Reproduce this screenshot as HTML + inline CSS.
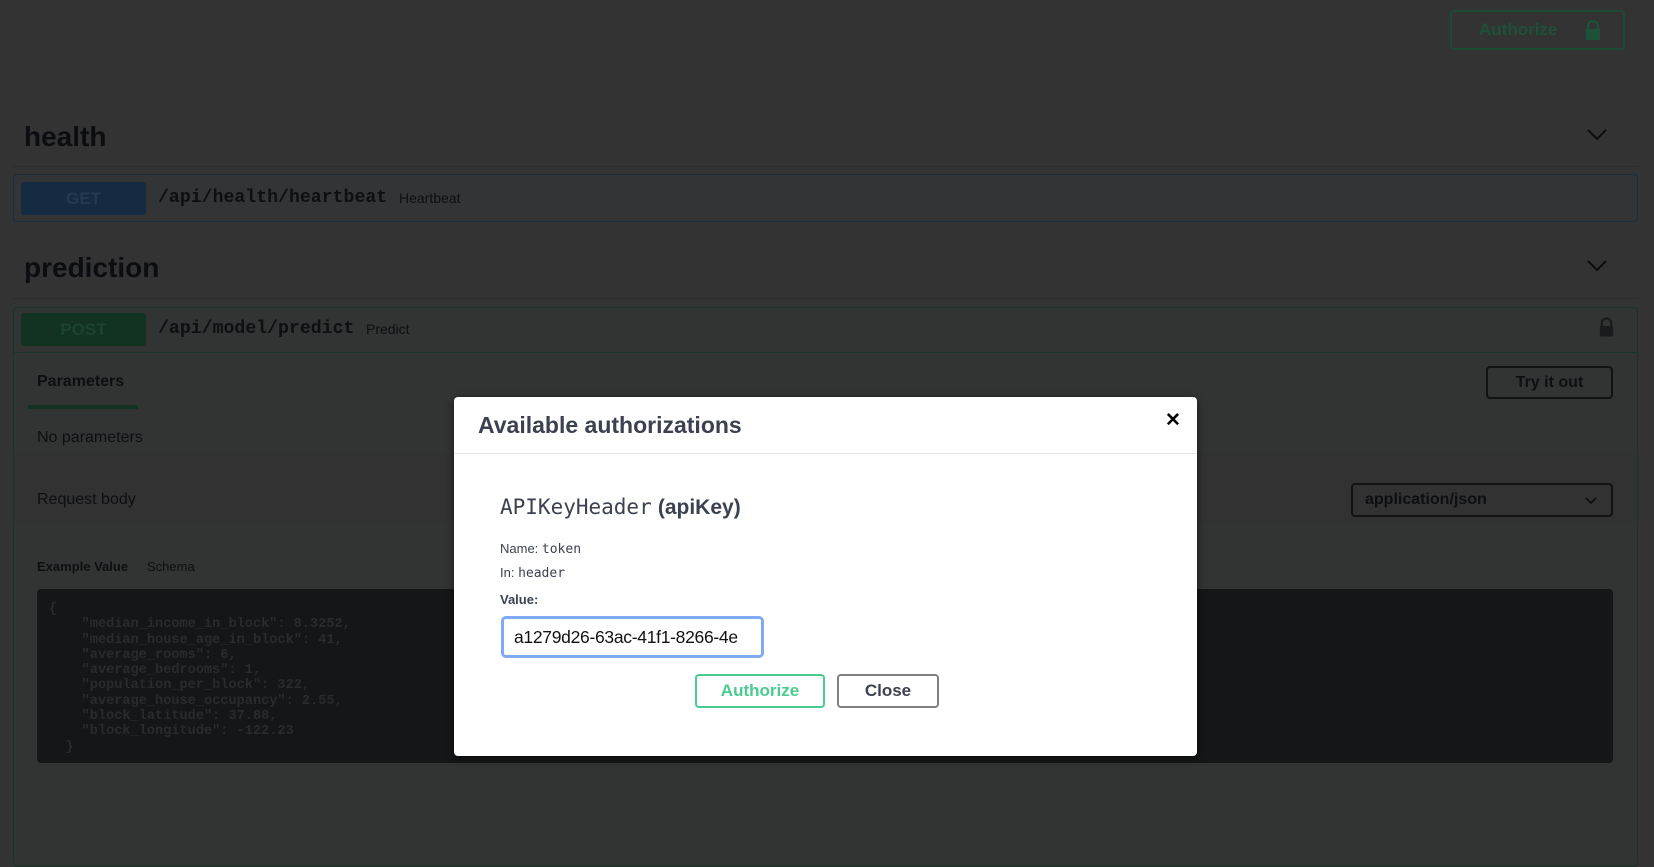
<!DOCTYPE html>
<html><head><meta charset="utf-8">
<style>
*{margin:0;padding:0;box-sizing:border-box}
body{width:1654px;height:840px;background:#333333;position:relative;overflow:hidden;font-family:"Liberation Sans",sans-serif}
.a{position:absolute}
.h{font-weight:bold;font-size:28px;color:#0c0d10}
.mono{font-family:"Liberation Mono",monospace}
</style></head><body>
<div class="a" style="left:1450px;top:10px;width:175px;height:40px;border:2px solid #1c4a34;border-radius:4px;color:#1d5138;font-weight:bold;font-size:17px;line-height:36px;padding-left:27px">Authorize
<svg class="a" style="left:132px;top:8px" width="18" height="20" viewBox="0 0 18 20"><path d="M4 9V6a5 5 0 0 1 10 0v3" fill="none" stroke="#1d5138" stroke-width="2.4"/><rect x="2" y="9" width="14" height="11" rx="1" fill="#1d5138"/></svg></div>

<div class="a h" style="left:24px;top:121px">health</div>
<svg class="a" style="left:1586px;top:128px" width="22" height="14"><path d="M2 2l9 9 9-9" fill="none" stroke="#0c0d10" stroke-width="2"/></svg>
<div class="a" style="left:13px;top:166px;width:1625px;height:1px;background:#2c2d2f"></div>
<div class="a" style="left:13px;top:174px;width:1625px;height:48px;border:1px solid #1a2e40;border-radius:4px;background:#323436"></div>
<div class="a" style="left:21px;top:182px;width:125px;height:33px;background:#142b42;border-radius:3px;color:#233a50;font-weight:bold;font-size:17px;text-align:center;line-height:33px">GET</div>
<div class="a mono" style="left:158px;top:188px;font-size:18.2px;font-weight:bold;color:#0e0f12">/api/health/heartbeat</div>
<div class="a" style="left:399px;top:190px;font-size:14px;color:#0e0f12">Heartbeat</div>

<div class="a h" style="left:24px;top:252px">prediction</div>
<svg class="a" style="left:1586px;top:259px" width="22" height="14"><path d="M2 2l9 9 9-9" fill="none" stroke="#0c0d10" stroke-width="2"/></svg>
<div class="a" style="left:13px;top:298px;width:1625px;height:1px;background:#2c2d2f"></div>
<div class="a" style="left:13px;top:307px;width:1625px;height:560px;border:1px solid #18352a;border-radius:4px;background:#323333"></div>
<div class="a" style="left:14px;top:352px;width:1623px;height:1px;background:#18352a"></div>
<div class="a" style="left:21px;top:313px;width:125px;height:33px;background:#123322;border-radius:3px;color:#1c4330;font-weight:bold;font-size:17px;text-align:center;line-height:33px">POST</div>
<div class="a mono" style="left:158px;top:319px;font-size:18.2px;font-weight:bold;color:#0e0f12">/api/model/predict</div>
<div class="a" style="left:366px;top:321px;font-size:14px;color:#0e0f12">Predict</div>
<svg class="a" style="left:1598px;top:317px" width="17" height="20" viewBox="0 0 18 20"><path d="M4 9V6a5 5 0 0 1 10 0v3" fill="none" stroke="#1a1b1d" stroke-width="2.4"/><rect x="2" y="9" width="14" height="11" rx="1" fill="#1a1b1d"/></svg>

<div class="a" style="left:37px;top:373px;font-size:16px;font-weight:bold;color:#0e0f12">Parameters</div>
<div class="a" style="left:28px;top:405px;width:110px;height:4px;background:#123322"></div>
<div class="a" style="left:1486px;top:366px;width:127px;height:33px;border:2px solid #111214;border-radius:4px;font-size:16px;font-weight:bold;color:#0e0f12;text-align:center;line-height:29px">Try it out</div>
<div class="a" style="left:37px;top:429px;font-size:16px;color:#0e0f12">No parameters</div>
<div class="a" style="left:14px;top:453px;width:1623px;height:70px;background:#323232"></div>
<div class="a" style="left:37px;top:491px;font-size:16px;color:#0e0f12">Request body</div>
<div class="a" style="left:1351px;top:483px;width:262px;height:34px;border:2px solid #111214;border-radius:4px;font-size:16px;font-weight:bold;color:#0e0f12;line-height:30px;padding-left:12px">application/json
<svg class="a" style="left:232px;top:12px" width="12" height="8"><path d="M1 1l5 5 5-5" fill="none" stroke="#0e0f12" stroke-width="1.8"/></svg></div>
<div class="a" style="left:37px;top:559px;font-size:13px;font-weight:bold;color:#0e0f12">Example Value</div>
<div class="a" style="left:147px;top:559px;font-size:13px;color:#0e0f12">Schema</div>
<div class="a" style="left:37px;top:589px;width:1576px;height:174px;background:#151617;border-radius:4px"></div>
<pre class="a mono" style="left:49px;top:602px;font-size:13.6px;line-height:15.3px;font-weight:bold;color:#2a2b2d">{
    "median_income_in_block": 8.3252,
    "median_house_age_in_block": 41,
    "average_rooms": 6,
    "average_bedrooms": 1,
    "population_per_block": 322,
    "average_house_occupancy": 2.55,
    "block_latitude": 37.88,
    "block_longitude": -122.23
  }</pre>

<div class="a" style="left:454px;top:397px;width:743px;height:359px;background:#fff;border-radius:4px;box-shadow:0 2px 8px rgba(0,0,0,.5)">
  <div class="a" style="left:24px;top:15px;font-size:23px;font-weight:bold;color:#3b4151">Available authorizations</div>
  <div class="a" style="left:711px;top:12px;font-size:19px;font-weight:bold;color:#000">✕</div>
  <div class="a" style="left:1px;top:56px;width:741px;height:1px;background:#e6e6e6"></div>
  <div class="a" style="left:46px;top:97px;font-size:22px;color:#3b4151"><span style="font-family:'DejaVu Sans Mono',monospace;font-size:21px">APIKeyHeader</span> <b style="font-size:21px">(apiKey)</b></div>
  <div class="a" style="left:46px;top:144px;font-size:13px;color:#3b4151">Name: <span style="font-family:'DejaVu Sans Mono',monospace">token</span></div>
  <div class="a" style="left:46px;top:168px;font-size:13px;color:#3b4151">In: <span style="font-family:'DejaVu Sans Mono',monospace">header</span></div>
  <div class="a" style="left:46px;top:195px;font-size:13px;font-weight:bold;color:#3b4151">Value:</div>
  <div class="a" style="left:47px;top:219px;width:263px;height:42px;border:3px solid #7faaf5;border-radius:5px;overflow:hidden;font-size:17.5px;color:#111;line-height:36px;padding-left:10px;white-space:nowrap;letter-spacing:-0.3px">a1279d26-63ac-41f1-8266-4e</div>
  <div class="a" style="left:241px;top:277px;width:130px;height:34px;border:2px solid #49cc90;border-radius:4px;color:#49cc90;font-weight:bold;font-size:17px;text-align:center;line-height:30px">Authorize</div>
  <div class="a" style="left:383px;top:277px;width:102px;height:34px;border:2px solid #808080;border-radius:4px;color:#3b4151;font-weight:bold;font-size:17px;text-align:center;line-height:30px">Close</div>
</div>
</body></html>
